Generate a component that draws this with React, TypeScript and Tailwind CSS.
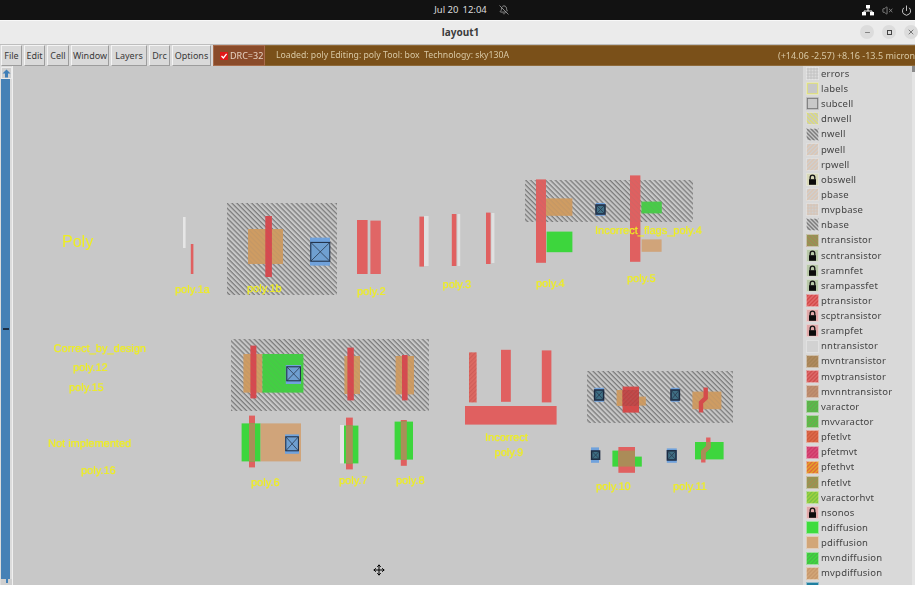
import { BellOff, Minus, Move, Power, VolumeX, X } from "lucide-react";

// ---- layer list on the right ----

type Layer = {
    name: string;
    bg: string;
    line?: string;
    dir?: "down" | "up";
    frame?: string;
    lock?: boolean;
    grid?: boolean;
};

const layers: Layer[] = [
    { name: "errors", bg: "#dcdcdc", line: "#c2c2c2", grid: true },
    { name: "labels", bg: "#c8c8c8", frame: "#e2e278" },
    { name: "subcell", bg: "#c8c8c8", frame: "#747474" },
    { name: "dnwell", bg: "#c8c8c8", line: "#dcdc78", dir: "down" },
    { name: "nwell", bg: "#c8c8c8", line: "#7c7c7c", dir: "down" },
    { name: "pwell", bg: "#cfcfcf", line: "#dcc6b4", dir: "up" },
    { name: "rpwell", bg: "#cfcfcf", line: "#dcc6b4", dir: "up" },
    { name: "obswell", bg: "#d8d8b8", lock: true },
    { name: "pbase", bg: "#cfcfcf", line: "#dcc6b4", dir: "up" },
    { name: "mvpbase", bg: "#cfcfcf", line: "#d8c4b4", grid: true },
    { name: "nbase", bg: "#c8c8c8", line: "#7c7c7c", dir: "down" },
    { name: "ntransistor", bg: "#a58455", line: "#8f9a55", dir: "down" },
    { name: "scntransistor", bg: "#b8c8a8", lock: true },
    { name: "sramnfet", bg: "#b8c8a8", lock: true },
    { name: "srampassfet", bg: "#b8c8a8", lock: true },
    { name: "ptransistor", bg: "#d34a4a", line: "#e26a6a", dir: "up" },
    { name: "scptransistor", bg: "#e0a8a8", lock: true },
    { name: "srampfet", bg: "#e0a8a8", lock: true },
    { name: "nntransistor", bg: "#d2d2d2" },
    { name: "mvntransistor", bg: "#a58455", line: "#b08a60", dir: "up" },
    { name: "mvptransistor", bg: "#cf4f4f", line: "#de6a6a", dir: "up" },
    { name: "mvnntransistor", bg: "#b8866a", line: "#c09070", dir: "up" },
    { name: "varactor", bg: "#55bf4a", line: "#66a84e", dir: "up" },
    { name: "mvvaractor", bg: "#52c246", line: "#72a850", dir: "up" },
    { name: "pfetlvt", bg: "#d05a3c", line: "#dd6a4a", dir: "up" },
    { name: "pfetmvt", bg: "#d0386a", line: "#d84c78", dir: "up" },
    { name: "pfethvt", bg: "#e2683a", line: "#e2a428", dir: "up" },
    { name: "nfetlvt", bg: "#a58a50", line: "#8f9a55", dir: "up" },
    { name: "varactorhvt", bg: "#78c444", line: "#a0d040", dir: "up" },
    { name: "nsonos", bg: "#e0a8a8", lock: true },
    { name: "ndiffusion", bg: "#3ddc3d" },
    { name: "pdiffusion", bg: "#d2a678" },
    { name: "mvndiffusion", bg: "#3ddc3d", line: "#48b848", dir: "up" },
    { name: "mvpdiffusion", bg: "#d2a678", line: "#c8986c", dir: "up" },
    // only the top of this one is on screen
    { name: "", bg: "#1f7fa0" },
];

function Swatch({ layer }: { layer: Layer }) {
    const offsets = [-8, -4, 0, 4, 8, 12];
    return (
        <svg width="13" height="13" viewBox="0 0 13 13" className="shrink-0">
            <rect x="0" y="0" width="13" height="13" fill={layer.bg} />
            {layer.dir &&
                offsets.map((o) => (
                    <line
                        key={o}
                        x1={o}
                        y1={layer.dir === "down" ? 0 : 13}
                        x2={o + 13}
                        y2={layer.dir === "down" ? 13 : 0}
                        stroke={layer.line}
                        strokeWidth="1.5"
                    />
                ))}
            {layer.grid &&
                [2, 5, 8, 11].map((o) => (
                    <g key={o} stroke={layer.line} strokeWidth="1">
                        <line x1={o} y1="0" x2={o} y2="13" />
                        <line x1="0" y1={o} x2="13" y2={o} />
                    </g>
                ))}
            {layer.frame && (
                <rect x="1" y="1" width="11" height="11" fill="none" stroke={layer.frame} strokeWidth="1.6" />
            )}
            {layer.lock && (
                <>
                    <path d="M4.2 6.5V4.4a2.3 2.3 0 0 1 4.6 0v2.1" fill="none" stroke="#111" strokeWidth="1.3" />
                    <rect x="3" y="6.2" width="7" height="5.6" fill="#0c0c0c" />
                </>
            )}
            <rect x="0.5" y="0.5" width="12" height="12" fill="none" stroke="#ececec" strokeOpacity="0.55" />
        </svg>
    );
}

// ---- layout canvas, all numbers are window pixels ----

const POLY = "#e06060";
const NDIFF = "#3dd63d";
const PDIFF = "#d0a47a";
const PDIFF_WELL = "#cf9c62";

type Box = [number, number, number, number, string];

const hatchBoxes: [number, number, number, number][] = [
    [227, 203, 110, 92],
    [525, 180, 168, 42],
    [231, 339, 198, 72],
    [587, 371, 146, 52],
];

const boxes: Box[] = [
    // poly.1a
    [183, 217, 2.6, 31, "#e6e6e6"],
    [190.8, 244, 2.6, 30, POLY],
    // poly.1b
    [248, 229, 35, 35, PDIFF_WELL],
    [265.3, 216, 6.6, 61, "#d8484e"],
    // poly.2
    [357, 220, 10.6, 54, POLY],
    [370.4, 220.6, 10.4, 53.4, "#e06666"],
    // poly.3
    [424, 216, 4.6, 50, "#e0e0e0"],
    [419.4, 216.6, 4.6, 50, POLY],
    [457.4, 214, 2.8, 52, "#e0e0e0"],
    [451.8, 214, 4.6, 52, POLY],
    [491.4, 213, 3, 50, "#e0e0e0"],
    [486, 212.6, 4.6, 51.4, POLY],
    // poly.4
    [546, 198.4, 26.4, 17.4, PDIFF_WELL],
    [546.6, 231.6, 25.8, 20.6, NDIFF],
    [536, 179.4, 10, 83.4, POLY],
    // poly.5
    [641.4, 201.6, 20.4, 11.8, "#48cc48"],
    [641.6, 239.4, 20, 12.4, PDIFF],
    [630, 175.4, 10.4, 86.4, POLY],
    // poly.12 / 15 row
    [243.4, 354, 19, 38.6, PDIFF_WELL],
    [262.4, 354, 41, 38.6, "#42d042"],
    [250.4, 345.6, 6, 52.8, "#d8484e"],
    [344.4, 356, 15.6, 38, PDIFF_WELL],
    [347.4, 347.6, 6.4, 52.8, "#d8484e"],
    [395.6, 356, 18.4, 38.4, PDIFF_WELL],
    [402, 355, 5.6, 45.4, "#d8484e"],
    // poly.6
    [249, 415.6, 6, 51.8, POLY],
    [241.6, 423.4, 19, 38, NDIFF],
    [260.6, 423.4, 40.4, 38, PDIFF],
    [249, 423.4, 6, 38, "#a89058"],
    // poly.7
    [340, 425, 4, 38.4, "#e4e4e4"],
    [346, 417.6, 6.8, 51.8, POLY],
    [344, 425.6, 14.4, 37.8, NDIFF],
    [346, 425.6, 6.8, 37.8, "#a89058"],
    // poly.8
    [400.8, 420, 6, 45.8, POLY],
    [394.6, 421.6, 18.4, 38, NDIFF],
    [400.8, 421.6, 6, 38, "#a89058"],
    // poly.9
    [469, 352.4, 7.6, 50, "#dd6a62"],
    [501, 349.8, 9.8, 52, POLY],
    [541.8, 350.4, 9.6, 52, POLY],
    [465, 406, 91.6, 18.6, POLY],
    // poly.10 in well
    [616.6, 390, 22.4, 16, PDIFF_WELL],
    [639, 396.6, 6.8, 9, PDIFF_WELL],
    [622.6, 386.6, 16.4, 26, "#d84848"],
    [622.6, 390, 16.4, 16, "#c44848"],
    // poly.11 in well
    [692.4, 391.6, 29, 17.6, PDIFF_WELL],
    // poly.10 below
    [612.4, 450.6, 6.4, 16, NDIFF],
    [634.6, 456.6, 7.2, 10, NDIFF],
    [618.4, 447, 16.6, 25.8, POLY],
    [618.4, 450.6, 16.6, 16, "#ab8c58"],
    // poly.11 below
    [695, 442, 28.6, 17.4, NDIFF],
];

// [x, y, w, h of the blue cut, x, y, w, h of the dark square]
const contacts: [number, number, number, number, number, number, number, number][] = [
    [310, 237.6, 20, 28, 310.8, 242.4, 19, 18.8],
    [285.8, 365, 15.2, 19, 286.8, 366.8, 13.6, 14],
    [285, 434.4, 14, 19.4, 285.8, 436.8, 12.6, 14],
    [595.8, 203, 9.2, 12.8, 596, 205, 9, 9],
    [594.4, 387.8, 9.6, 14, 594.6, 390, 9, 10],
    [670.8, 387.8, 8.6, 14, 671, 390, 8.4, 10],
    [591, 447.4, 8, 15.4, 591.6, 451, 8, 8.2],
    [666.8, 448.4, 10, 14.4, 667.4, 450.8, 8.6, 9.2],
];

const labels: [string, number, number][] = [
    ["poly.1a", 175, 289],
    ["poly.1b", 247, 288],
    ["poly.2", 357, 291],
    ["poly.3", 442.6, 284],
    ["poly.4", 536, 282.6],
    ["poly.5", 627, 277.6],
    ["Incorrect_flags_poly.4", 595, 230],
    ["Correct_by_design", 53.6, 347.6],
    ["poly.12", 73, 367],
    ["poly.15", 69, 387],
    ["Not implemented", 48, 443],
    ["poly.16", 81, 470],
    ["poly.6", 251, 481.6],
    ["poly.7", 339, 480],
    ["poly.8", 396, 480],
    ["Incorrect", 485, 436.6],
    ["poly.9", 494.6, 451.6],
    ["poly.10", 596, 486],
    ["poly.11", 673, 486],
];

function LayoutDrawing() {
    return (
        <svg viewBox="13 66 790 519" className="block w-full h-full">
            <defs>
                <pattern id="nwell" width="3.5" height="3.5" patternUnits="userSpaceOnUse" patternTransform="rotate(45)">
                    <rect width="3.5" height="1.25" fill="#7c7c7c" />
                </pattern>
                <pattern id="polyHatch" width="3" height="3" patternUnits="userSpaceOnUse" patternTransform="rotate(-45)">
                    <rect width="3" height="1.2" fill="#b04040" fillOpacity="0.6" />
                </pattern>
            </defs>

            {hatchBoxes.map(([x, y, w, h]) => (
                <rect key={`${x}-${y}`} x={x} y={y} width={w} height={h} fill="url(#nwell)" />
            ))}

            {boxes.map(([x, y, w, h, fill], i) => (
                <rect key={i} x={x} y={y} width={w} height={h} fill={fill} />
            ))}

            {/* the well shows faintly through whatever sits on it */}
            {hatchBoxes.map(([x, y, w, h]) => (
                <rect key={`over-${x}`} x={x} y={y} width={w} height={h} fill="url(#nwell)" fillOpacity="0.14" />
            ))}

            {/* darker hatch where poly crosses the active area */}
            <rect x="622.6" y="390" width="16.4" height="16" fill="url(#polyHatch)" />
            <rect x="469" y="352.4" width="7.6" height="50" fill="url(#polyHatch)" fillOpacity="0.5" />

            {/* bent poly of poly.11 */}
            <path d="M705.7 387.6V398L701 402.5V412.6" fill="none" stroke="#d44c4c" strokeWidth="4.4" />
            <path d="M708.3 437.4V447L703.3 452V462.6" fill="none" stroke={POLY} strokeWidth="4.4" />
            <path d="M708.3 442V447L703.3 452V459.4" fill="none" stroke="#ab8c58" strokeWidth="4.4" />

            {contacts.map(([x, y, w, h, sx, sy, sw, sh]) => (
                <g key={`${x}-${y}`}>
                    <rect x={x} y={y} width={w} height={h} fill="#70a2dc" />
                    <rect
                        x={sx}
                        y={sy}
                        width={sw}
                        height={sh}
                        fill={sw < 10 ? "#3f6f84" : "#6f9fd0"}
                        stroke="#1c2a40"
                        strokeWidth={sw < 10 ? 1.5 : 1}
                    />
                    <path
                        d={`M${sx} ${sy}L${sx + sw} ${sy + sh}M${sx + sw} ${sy}L${sx} ${sy + sh}`}
                        stroke="#2a3a50"
                        strokeWidth="0.8"
                    />
                </g>
            ))}

            <text x="62" y="246.5" className="fill-[#eeee20] text-[16px] font-['Liberation_Sans',sans-serif]">
                Poly
            </text>
            {labels.map(([text, x, y]) => (
                <text
                    key={text}
                    x={x}
                    y={Math.round(y + 4)}
                    textRendering="geometricPrecision"
                    stroke="#eeee20"
                    strokeWidth="0.2"
                    className="fill-[#eeee20] text-[11px] font-['Liberation_Sans',sans-serif]"
                >
                    {text}
                </text>
            ))}
        </svg>
    );
}

const menus = [
    { label: "File", width: "w-[21px]" },
    { label: "Edit", width: "w-[21px]" },
    { label: "Cell", width: "w-[22px]" },
    { label: "Window", width: "w-[38px]" },
    { label: "Layers", width: "w-[36px]" },
    { label: "Drc", width: "w-[21px]" },
    { label: "Options", width: "w-[39px]" },
];

export default function App() {
    return (
        <div className="w-[919px] h-[589px] bg-white overflow-hidden font-['Noto_Sans',sans-serif]">
            <div className="w-[915px] h-[585px] flex flex-col blur-[0.3px]">
                {/* gnome top bar */}
                <div className="relative h-5 bg-[#121212] flex items-center justify-center text-[9.5px] text-[#dcdcdc] shrink-0">
                    <div className="flex items-center gap-[4px] pl-[28px]">
                        <span>Jul 20</span>
                        <span>12:04</span>
                        <BellOff size={10} className="ml-[8px] text-[#a0a0a0]" />
                    </div>
                    <div className="absolute right-[3px] top-[4px] flex items-center gap-[8px]">
                        <svg width="12" height="12" viewBox="0 0 12 12" className="text-white">
                            <path d="M6 4v3M2 9V7h8v2" fill="none" stroke="currentColor" strokeWidth="1" />
                            <rect x="4" y="1" width="4" height="3.4" fill="currentColor" />
                            <rect x="0" y="8" width="4" height="3.4" fill="currentColor" />
                            <rect x="8" y="8" width="4" height="3.4" fill="currentColor" />
                        </svg>
                        <VolumeX size={11} className="text-[#8a8a8a]" />
                        <Power size={11} className="text-[#d8d8d8]" />
                    </div>
                </div>

                {/* window title */}
                <div className="relative h-[25px] bg-[#ebebeb] border-t border-[#f8f8f8] border-b border-b-[#bdbdbd] flex items-center justify-center shrink-0">
                    <span className="text-[10px] font-bold text-[#3c3c3c] pl-[6px]">layout1</span>
                    <div className="absolute right-[-3px] top-[4px] flex gap-[8px]">
                        <span className="w-[14px] h-[14px] rounded-full bg-[#dcdcdc] flex items-center justify-center">
                            <Minus size={7} className="text-[#444]" />
                        </span>
                        <span className="w-[14px] h-[14px] rounded-full bg-[#dcdcdc] flex items-center justify-center">
                            <span className="w-[5px] h-[5px] border border-[#444]" />
                        </span>
                        <span className="w-[14px] h-[14px] rounded-full bg-[#dcdcdc] flex items-center justify-center">
                            <X size={8} className="text-[#444]" />
                        </span>
                    </div>
                </div>

                {/* menu and status row */}
                <div className="h-[21px] flex items-stretch bg-[#d9d9d9] shrink-0 text-[9px]">
                    <div className="flex items-stretch gap-[2px] pl-[1px] pr-[2px]">
                        {menus.map((m) => (
                            <div
                                key={m.label}
                                className={`${m.width} bg-[#d9d9d9] border-t border-l border-[#f4f4f4] border-r border-b border-r-[#9c9c9c] border-b-[#9c9c9c] flex items-center justify-center text-[#3a3a3a]`}
                            >
                                {m.label}
                            </div>
                        ))}
                    </div>
                    <div className="w-[52px] bg-[#8a4b2a] border border-[#a86c4c] flex items-center gap-[2px] pl-[6px] text-[#e6d2c0] text-[9px] whitespace-nowrap">
                        <svg width="8" height="8" viewBox="0 0 8 8" className="shrink-0">
                            <rect width="8" height="8" fill="#e01818" />
                            <path d="M1.5 4L3.4 6L6.6 1.8" fill="none" stroke="#fff" strokeWidth="1.3" />
                        </svg>
                        <span>DRC=32</span>
                    </div>
                    <div className="flex-1 bg-[#7a5019] border-t border-b border-[#8e6a3a] flex items-center justify-between pl-[11px] text-[#d8c8a4]">
                        <span className="whitespace-pre text-[8.7px]">Loaded: poly Editing: poly Tool: box  Technology: sky130A</span>
                        <span className="whitespace-pre text-[9px]">(+14.06 -2.57) +8.16 -13.5 micron</span>
                    </div>
                </div>

                <div className="flex-1 min-h-0 flex">
                    {/* left scrollbar */}
                    <div className="w-[13px] bg-[#dcdcdc] flex flex-col items-start pl-[1px] pt-[1px] shrink-0 border-r border-r-[#f0f0f0]">
                        <div className="w-[11px] h-[12px] bg-[#cfcfcf] border border-[#ececec] flex items-center justify-center text-[#3f7fb8]">
                            <svg width="9" height="9" viewBox="0 0 9 9">
                                <path d="M4.5 0.5L8.5 4.5H6V8.5H3V4.5H0.5Z" fill="currentColor" />
                            </svg>
                        </div>
                        <div className="w-[9px] flex-1 bg-[#4681b6] flex flex-col justify-center items-center">
                            <span className="w-[6px] h-[2px] bg-[#1c2e44]" />
                        </div>
                        <div className="w-[11px] h-[6px] bg-[#cfcfcf] flex justify-center">
                            <span className="w-[2px] h-[4px] bg-[#3f7fb8]" />
                        </div>
                    </div>

                    {/* canvas */}
                    <div className="relative flex-1 min-w-0 bg-[#c8c8c8]">
                        <LayoutDrawing />
                        <Move size={12} strokeWidth={2} className="absolute left-[360px] top-[498px] text-black" />
                    </div>

                    {/* layer list */}
                    <div className="w-[112px] shrink-0 bg-[#d9d9d9] overflow-hidden pl-[3px] flex">
                        <div className="flex-1">
                            {layers.map((layer) => (
                                <div key={layer.bg + layer.name} className="h-[15.15px] flex items-center gap-[2px]">
                                    <Swatch layer={layer} />
                                    {layer.name && (
                                        <span className="text-[9.5px] tracking-[0.2px] text-[#444] leading-none">{layer.name}</span>
                                    )}
                                </div>
                            ))}
                        </div>
                        <div className="w-[3px] h-full bg-[#e4e4e4] flex flex-col">
                            <span className="h-[6px] bg-[#8a8a8a]" />
                        </div>
                    </div>
                </div>
            </div>
        </div>
    );
}
